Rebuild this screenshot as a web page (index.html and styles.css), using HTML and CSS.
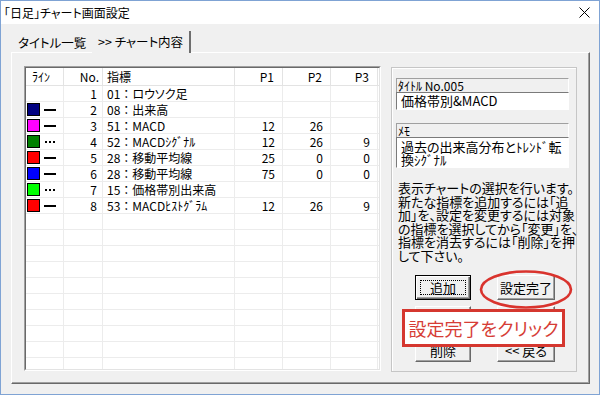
FILE: index.html
```html
<!DOCTYPE html>
<html lang="ja">
<head>
<meta charset="utf-8">
<title>チャート画面設定</title>
<link rel="stylesheet" href="styles.css">
</head>
<body>
<div class="window">
  <div class="titlebar">
    <span class="title">｢日足｣チャート画面設定</span>
    <svg class="close" width="11" height="11" viewBox="0 0 11 11"><path d="M0.5 0.5 L10.5 10.5 M10.5 0.5 L0.5 10.5" stroke="#000" stroke-width="1" fill="none"/></svg>
  </div>
  <div class="tabs">
    <div class="tab">タイトル一覧</div>
    <div class="tab active">&gt;&gt; チャート内容</div>
  </div>
  <div class="panel">
    <div class="list">
      <div class="list-inner">
        <div class="row head">
          <div class="c c-line">ﾗｲﾝ</div>
          <div class="c c-no">No.</div>
          <div class="c c-name">指標</div>
          <div class="c c-p">P1</div>
          <div class="c c-p">P2</div>
          <div class="c c-p">P3</div>
          <div class="c c-fill"></div>
        </div>
        <div class="row">
          <div class="c c-line"></div>
          <div class="c c-no">1</div>
          <div class="c c-name">01<span class="cl">：</span>ロウソク足</div>
          <div class="c c-p"></div><div class="c c-p"></div><div class="c c-p"></div><div class="c c-fill"></div>
        </div>
        <div class="row">
          <div class="c c-line"><span class="sw sw-navy"></span><span class="ln"></span></div>
          <div class="c c-no">2</div>
          <div class="c c-name">08<span class="cl">：</span>出来高</div>
          <div class="c c-p"></div><div class="c c-p"></div><div class="c c-p"></div><div class="c c-fill"></div>
        </div>
        <div class="row">
          <div class="c c-line"><span class="sw sw-magenta"></span><span class="ln"></span></div>
          <div class="c c-no">3</div>
          <div class="c c-name">51<span class="cl">：</span>MACD</div>
          <div class="c c-p">12</div><div class="c c-p">26</div><div class="c c-p"></div><div class="c c-fill"></div>
        </div>
        <div class="row">
          <div class="c c-line"><span class="sw sw-green"></span><span class="dots"><i></i><i></i><i></i></span></div>
          <div class="c c-no">4</div>
          <div class="c c-name">52<span class="cl">：</span>MACDｼｸﾞﾅﾙ</div>
          <div class="c c-p">12</div><div class="c c-p">26</div><div class="c c-p">9</div><div class="c c-fill"></div>
        </div>
        <div class="row">
          <div class="c c-line"><span class="sw sw-red"></span><span class="ln"></span></div>
          <div class="c c-no">5</div>
          <div class="c c-name">28<span class="cl">：</span>移動平均線</div>
          <div class="c c-p">25</div><div class="c c-p">0</div><div class="c c-p">0</div><div class="c c-fill"></div>
        </div>
        <div class="row">
          <div class="c c-line"><span class="sw sw-blue"></span><span class="ln"></span></div>
          <div class="c c-no">6</div>
          <div class="c c-name">28<span class="cl">：</span>移動平均線</div>
          <div class="c c-p">75</div><div class="c c-p">0</div><div class="c c-p">0</div><div class="c c-fill"></div>
        </div>
        <div class="row">
          <div class="c c-line"><span class="sw sw-lime"></span><span class="dots"><i></i><i></i><i></i></span></div>
          <div class="c c-no">7</div>
          <div class="c c-name">15<span class="cl">：</span>価格帯別出来高</div>
          <div class="c c-p"></div><div class="c c-p"></div><div class="c c-p"></div><div class="c c-fill"></div>
        </div>
        <div class="row">
          <div class="c c-line"><span class="sw sw-red"></span><span class="ln"></span></div>
          <div class="c c-no">8</div>
          <div class="c c-name">53<span class="cl">：</span>MACDﾋｽﾄｸﾞﾗﾑ</div>
          <div class="c c-p">12</div><div class="c c-p">26</div><div class="c c-p">9</div><div class="c c-fill"></div>
        </div>
        <div class="row"><div class="c"></div><div class="c"></div><div class="c"></div><div class="c"></div><div class="c"></div><div class="c"></div><div class="c c-fill"></div></div>
        <div class="row"><div class="c"></div><div class="c"></div><div class="c"></div><div class="c"></div><div class="c"></div><div class="c"></div><div class="c c-fill"></div></div>
        <div class="row"><div class="c"></div><div class="c"></div><div class="c"></div><div class="c"></div><div class="c"></div><div class="c"></div><div class="c c-fill"></div></div>
        <div class="row"><div class="c"></div><div class="c"></div><div class="c"></div><div class="c"></div><div class="c"></div><div class="c"></div><div class="c c-fill"></div></div>
        <div class="row"><div class="c"></div><div class="c"></div><div class="c"></div><div class="c"></div><div class="c"></div><div class="c"></div><div class="c c-fill"></div></div>
        <div class="row"><div class="c"></div><div class="c"></div><div class="c"></div><div class="c"></div><div class="c"></div><div class="c"></div><div class="c c-fill"></div></div>
        <div class="row"><div class="c"></div><div class="c"></div><div class="c"></div><div class="c"></div><div class="c"></div><div class="c"></div><div class="c c-fill"></div></div>
        <div class="row"><div class="c"></div><div class="c"></div><div class="c"></div><div class="c"></div><div class="c"></div><div class="c"></div><div class="c c-fill"></div></div>
        <div class="row"><div class="c"></div><div class="c"></div><div class="c"></div><div class="c"></div><div class="c"></div><div class="c"></div><div class="c c-fill"></div></div>
        <div class="row"><div class="c"></div><div class="c"></div><div class="c"></div><div class="c"></div><div class="c"></div><div class="c"></div><div class="c c-fill"></div></div>
      </div>
    </div>
    <div class="side">
      <div class="field-label">ﾀｲﾄﾙ No.005</div>
      <div class="field-input">価格帯別&amp;MACD</div>
      <div class="field-label gap">ﾒﾓ</div>
      <div class="field-input memo">過去の出来高分布とﾄﾚﾝﾄﾞ転<br>換ｼｸﾞﾅﾙ</div>
      <div class="desc">表示チャートの選択を行います。<br>新たな指標を追加するには「追<br>加」を、設定を変更するには対象<br>の指標を選択してから「変更」を、<br>指標を消去するには「削除」を押<br>して下さい。</div>
      <div class="buttons">
        <div class="btn default"><span>追加</span></div>
        <div class="btn">設定完了</div>
        <div class="btn"></div>
        <div class="btn"></div>
        <div class="btn low">削除</div>
        <div class="btn low">&lt;&lt; 戻る</div>
      </div>
    </div>
  </div>
  <svg class="ring" width="96" height="41" viewBox="0 0 96 41"><ellipse cx="48" cy="20.5" rx="45" ry="18" fill="none" stroke="#d9332d" stroke-width="2.6"/></svg>
  <div class="callout">設定完了をクリック</div>
</div>
</body>
</html>
```

FILE: styles.css
```css
* { box-sizing: border-box; }
html, body { margin: 0; padding: 0; }
body {
  width: 600px;
  height: 395px;
  overflow: hidden;
  background: #fff;
  color: #000;
  font-family: "Noto Sans CJK JP", "Noto Sans", sans-serif;
  font-feature-settings: "palt";
}
.window {
  position: relative;
  width: 600px;
  height: 395px;
  border: 1px solid #7fa3d4;
  background: #f0f0f0;
  display: flex;
  flex-direction: column;
}
.titlebar {
  height: 23px;
  flex: none;
  background: #fff;
  display: flex;
  align-items: center;
  padding-left: 3px;
}
.title { font-size: 12px; line-height: 14px; }
.close { margin-left: auto; margin-right: 9px; display: block; }

.tabs {
  margin-top: 7px;
  height: 21px;
  flex: none;
  display: flex;
  align-items: flex-end;
  padding-left: 13px;
}
.tab {
  height: 18px;
  width: 78px;
  font-size: 12.5px;
  line-height: 17px;
  padding-left: 4px;
  white-space: nowrap;
  background: #f0f0f0;
}
.tab.active {
  width: 99px;
  padding-left: 6px;
  line-height: 21px;
  border-right: 2px solid #6e6e6e;
  margin-bottom: -1px;
  height: 22px;
  position: relative;
  z-index: 1;
}

.panel {
  margin-left: 10px;
  width: 579px;
  height: 332px;
  flex: none;
  border-top: 1px solid #fff;
  border-left: 1px solid #fff;
  border-right: 1px solid #696969;
  border-bottom: 1px solid #696969;
  box-shadow: inset -1px -1px 0 #a0a0a0;
  padding: 13px 12px 0 12px;
  display: flex;
  align-items: flex-start;
  gap: 10px;
}

.list {
  width: 357px;
  height: 305px;
  flex: none;
  border: 1px solid;
  border-color: #a0a0a0 #fff #fff #a0a0a0;
}
.list-inner {
  width: 100%;
  height: 100%;
  border: 1px solid;
  border-color: #696969 #e3e3e3 #e3e3e3 #696969;
  background: #fff;
  overflow: hidden;
}
.row {
  display: grid;
  grid-template-columns: 38px 39px 132px 48px 48px 47px 1fr;
  height: 16px;
}
.c {
  border-right: 1px solid #ececec;
  border-bottom: 1px solid #ececec;
  font-size: 12px;
  line-height: 15px;
  white-space: nowrap;
}
.row.head { height: 18px; }
.row.head .c {
  border-right-color: #e3e3e3;
  border-bottom-color: #e3e3e3;
  line-height: 17px;
}
.c-fill { border-right: none; }
.c-line {
  display: flex;
  align-items: center;
  padding-left: 1px;
}
.head .c-line { padding-left: 6px; display: block; }
.c-no { text-align: right; padding-right: 5px; }
.head .c-no { padding-right: 3px; }
.c-name { padding-left: 4px; }
.cl { font-feature-settings: normal; }
.c-p { text-align: right; padding-right: 7px; }
.head .c-p { padding-right: 8px; }

.sw {
  width: 13px;
  height: 13px;
  border: 1px solid #000;
  flex: none;
}
.sw-navy { background: #000080; }
.sw-magenta { background: #ff00ff; }
.sw-green { background: #008000; }
.sw-red { background: #ff0000; }
.sw-blue { background: #0000ff; }
.sw-lime { background: #00ff00; }
.ln {
  width: 12px;
  height: 2px;
  background: #000;
  margin-left: 4px;
}
.dots {
  display: flex;
  gap: 2px;
  margin-left: 5px;
  margin-top: 1px;
}
.dots i {
  display: block;
  width: 2px;
  height: 2px;
  background: #000;
}

.side {
  width: 186px;
  height: 305px;
  flex: none;
  margin-top: 1px;
  border: 1px solid #c6c6c6;
  box-shadow: inset 1px 1px 0 #fff;
  padding: 10px 7px 0 4px;
  display: flex;
  flex-direction: column;
}
.field-label {
  height: 14px;
  flex: none;
  border-top: 1px solid #a0a0a0;
  border-left: 1px solid #a0a0a0;
  border-right: 1px solid #fff;
  font-size: 12px;
  line-height: 13px;
  padding-left: 1px;
  white-space: nowrap;
}
.field-label.gap { margin-top: 13px; }
.field-input {
  height: 18px;
  flex: none;
  background: #fff;
  border: 1px solid;
  border-color: #7a7a7a #fff #fff #7a7a7a;
  font-size: 13px;
  line-height: 16px;
  padding-left: 4px;
  white-space: nowrap;
}
.field-input.memo {
  height: 31px;
  line-height: 13px;
  padding-top: 2px;
}
.desc {
  margin-top: 13px;
  font-size: 13px;
  line-height: 13.6px;
  white-space: nowrap;
  padding-left: 2px;
}
.buttons {
  margin-top: 12px;
  padding-left: 19px;
  display: grid;
  grid-template-columns: 56px 58px;
  grid-auto-rows: 25px;
  column-gap: 26px;
  row-gap: 6px;
}
.btn {
  background: #f0f0f0;
  border: 1px solid;
  border-color: #fff #696969 #696969 #fff;
  box-shadow: inset -1px -1px 0 #a0a0a0;
  font-size: 13px;
  display: flex;
  align-items: center;
  justify-content: center;
  white-space: nowrap;
}
.btn.low { padding-top: 2px; }
.btn.default {
  border-color: #000;
  box-shadow: inset 1px 1px 0 #fff, inset -1px -1px 0 #696969, inset -2px -2px 0 #a0a0a0;
  position: relative;
}
.btn.default::after {
  content: "";
  position: absolute;
  left: 4px; top: 4px; right: 4px; bottom: 4px;
  border: 1px dotted #000;
}

.ring {
  position: absolute;
  left: 477px;
  top: 268px;
}
.callout {
  position: absolute;
  left: 401px;
  top: 308px;
  width: 163px;
  height: 38px;
  border: 3px solid #d5372f;
  background: #fff;
  color: #d63d36;
  font-size: 18px;
  display: flex;
  align-items: center;
  justify-content: center;
  white-space: nowrap;
}
```
